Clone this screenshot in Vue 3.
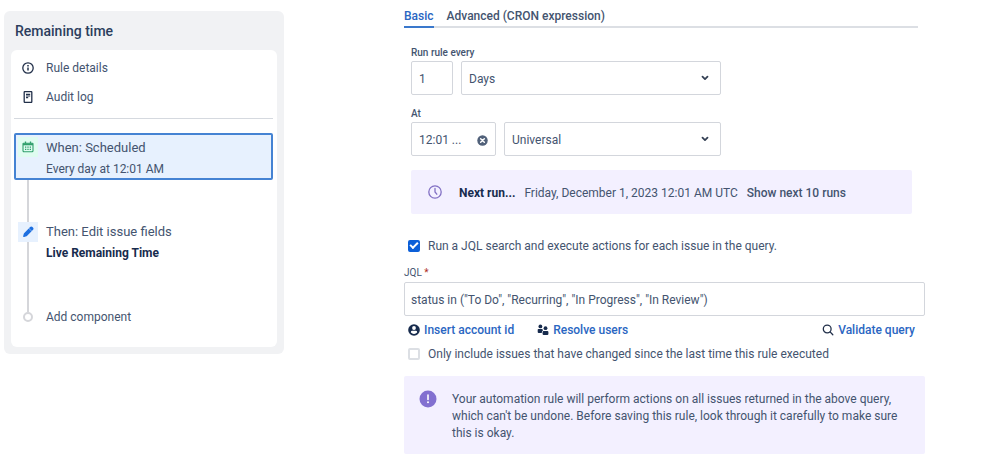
<script setup>
import { ref } from 'vue'

const tab = ref('basic')
const every = ref('1')
const unit = ref('Days')
const time = ref('12:01 ...')
const zone = ref('Universal')
const runSearch = ref(true)
const onlyChanged = ref(false)
const jql = ref('status in ("To Do", "Recurring", "In Progress", "In Review")')
</script>

<template>
  <div class="page">
    <aside class="rule">
      <h2 class="rule-title">Remaining time</h2>
      <div class="rule-card">
        <nav class="rule-nav">
          <a class="nav-item" href="#details">
            <svg viewBox="0 0 12 12" width="12" height="12" fill="none" stroke="#22304a">
              <circle cx="6" cy="6" r="5.2" stroke-width="1.3" />
              <path d="M6 5.4v3.2" stroke-width="1.5" />
              <path d="M6 3.1v1.4" stroke-width="1.5" />
            </svg>
            <span>Rule details</span>
          </a>
          <a class="nav-item" href="#audit">
            <svg viewBox="0 0 12 12" width="12" height="12" fill="none" stroke="#22304a">
              <path d="M2.800.6h6.400a.6.6 0 0 1 .6.6v9.600a.6.6 0 0 1-.6.6H2.800a.6.6 0 0 1-.6-.6V1.200a.6.6 0 0 1 .6-.6z" stroke-width="1.300" />
              <path d="M4 3.300h4.200M4 5h4.200M4 6.700h2.200" stroke-width="1.200" />
            </svg>
            <span>Audit log</span>
          </a>
        </nav>
        <ol class="steps">
          <li class="step selected">
            <div class="rail">
              <span class="badge green">
                <svg viewBox="0 0 12 12" width="12" height="12" fill="none" stroke="#2f9e6b">
                  <path d="M1.600 2.200h8.800a.6.6 0 0 1 .6.6v7a1 1 0 0 1-1 1H2a1 1 0 0 1-1-1v-7a.6.6 0 0 1 .6-.6z" stroke-width="1.100" />
                  <path d="M1 3.400h10" stroke-width="1.800" />
                  <path d="M3.500.6v2M8.500.6v2" stroke-width="1.300" />
                  <path d="M3 6.200h6M3 8.400h6" stroke-width="1.200" stroke-dasharray="1.300 1.050" />
                </svg>
              </span>
            </div>
            <div class="step-text">
              <span class="step-name">When: Scheduled</span>
              <span class="step-info">Every day at 12:01 AM</span>
            </div>
          </li>
          <li class="step gap" aria-hidden="true">
            <div class="rail"><span class="line"></span></div>
          </li>
          <li class="step edit">
            <div class="rail">
              <span class="badge blue">
                <svg viewBox="0 0 12 12" width="12" height="12" fill="#1d6fe0">
                  <path d="M6.700 2.400l2.900 2.900-4.700 4.700a1.200 1.200 0 0 1-.5.3l-2.200.6c-.7.2-1.200-.3-1-1l.6-2.200a1.200 1.200 0 0 1 .3-.5z" />
                  <path d="M7 2.300l1.100-1.200a1.700 1.700 0 0 1 2.400 0l.4.4a1.700 1.700 0 0 1 0 2.400L9.700 5z" />
                </svg>
              </span>
              <span class="line"></span>
            </div>
            <div class="step-text">
              <span class="step-name">Then: Edit issue fields</span>
              <strong class="step-info strong">Live Remaining Time</strong>
            </div>
          </li>
          <li class="step add">
            <div class="rail"><span class="dot"></span></div>
            <button class="add-button" type="button">Add component</button>
          </li>
        </ol>
      </div>
    </aside>

    <main class="config">
      <div class="tabs" role="tablist">
        <button class="tab" :class="{ active: tab === 'basic' }" type="button" role="tab" @click="tab = 'basic'">Basic</button>
        <button class="tab" :class="{ active: tab === 'cron' }" type="button" role="tab" @click="tab = 'cron'">Advanced (CRON expression)</button>
      </div>

      <section class="schedule">
        <div class="fields">
          <label class="label" for="every">Run rule every</label>
          <div class="row">
            <input id="every" v-model="every" class="box every" type="text" />
            <div class="select">
              <select v-model="unit" class="box" aria-label="Unit">
                <option>Days</option>
                <option>Weeks</option>
              </select>
              <svg class="chevron" viewBox="0 0 8 6" width="8" height="6" fill="none" stroke="#344054" stroke-width="1.800" stroke-linecap="round" stroke-linejoin="round">
                <path d="M1.500 1.700L4 4.100l2.500-2.400" />
              </svg>
            </div>
          </div>
          <label class="label" for="at">At</label>
          <div class="row">
            <div class="box time">
              <input id="at" v-model="time" class="time-input" type="text" />
              <button class="clear" type="button" aria-label="Clear" @click="time = ''">
                <svg viewBox="0 0 12 12" width="11" height="11">
                  <circle cx="6" cy="6" r="5.700" fill="#51617a" />
                  <path d="M4 4l4 4M8 4l-4 4" stroke="#fff" stroke-width="1.600" stroke-linecap="round" />
                </svg>
              </button>
            </div>
            <div class="select">
              <select v-model="zone" class="box" aria-label="Time zone">
                <option>Universal</option>
                <option>Local</option>
              </select>
              <svg class="chevron" viewBox="0 0 8 6" width="8" height="6" fill="none" stroke="#344054" stroke-width="1.800" stroke-linecap="round" stroke-linejoin="round">
                <path d="M1.500 1.700L4 4.100l2.500-2.400" />
              </svg>
            </div>
          </div>
        </div>

        <div class="next-run">
          <svg viewBox="0 0 14 14" width="14" height="14" fill="none" stroke="#8270c4" stroke-width="1.300" stroke-linecap="round">
            <circle cx="7" cy="7" r="6.200" />
            <path d="M7 3.400V7l1.800 2.200" />
          </svg>
          <p class="next-text">
            <strong class="next-label">Next run...</strong>
            <span>Friday, December 1, 2023 12:01 AM UTC</span>
            <button class="show-next" type="button">Show next 10 runs</button>
          </p>
        </div>
      </section>

      <section class="query">
        <label class="check">
          <input v-model="runSearch" type="checkbox" />
          <span>Run a JQL search and execute actions for each issue in the query.</span>
        </label>
        <label class="label jql-label" for="jql">JQL <span class="required">*</span></label>
        <input id="jql" v-model="jql" class="box jql" type="text" />
        <div class="links">
          <a class="link" href="#account">
            <svg viewBox="0 0 12 12" width="12" height="12">
              <circle cx="6" cy="6" r="5.800" fill="#172b4d" />
              <circle cx="6" cy="4" r="1.900" fill="#fff" />
              <path d="M2.900 8.600V8A1.200 1.200 0 0 1 4.100 6.800h3.800A1.200 1.200 0 0 1 9.100 8v.6A4 4 0 0 1 6 10a4 4 0 0 1-3.100-1.400z" fill="#fff" />
            </svg>
            <span>Insert account id</span>
          </a>
          <a class="link" href="#users">
            <svg viewBox="0 0 12 12" width="12" height="12" fill="#172b4d">
              <circle cx="3.400" cy="2.400" r="1.900" />
              <circle cx="8.500" cy="4.200" r="1.900" />
              <path d="M1.500 5h3.900a2.900 2.900 0 0 0 .6 1.500A2 2 0 0 0 4.800 8.400V9H1.700A1 1 0 0 1 .7 8V5.800A.8.8 0 0 1 1.500 5z" />
              <path d="M6.600 6.900h3.800a1 1 0 0 1 1 1v2.200a1 1 0 0 1-1 1H6.600a1 1 0 0 1-1-1V7.900a1 1 0 0 1 1-1z" />
            </svg>
            <span>Resolve users</span>
          </a>
          <a class="link validate" href="#validate">
            <svg viewBox="0 0 12 12" width="12" height="12" fill="none" stroke="#22304a" stroke-width="1.300" stroke-linecap="round">
              <circle cx="5.200" cy="5" r="3.900" />
              <path d="M8.100 7.900l2.700 2.800" />
            </svg>
            <span>Validate query</span>
          </a>
        </div>
        <label class="check">
          <input v-model="onlyChanged" type="checkbox" />
          <span>Only include issues that have changed since the last time this rule executed</span>
        </label>
        <div class="notice">
          <svg viewBox="0 0 18 18" width="18" height="18">
            <circle cx="9" cy="9" r="8.500" fill="#8270d0" />
            <path d="M9 5v4.400" stroke="#fff" stroke-width="1.600" stroke-linecap="round" />
            <circle cx="9" cy="12.300" r="1" fill="#fff" />
          </svg>
          <p>Your automation rule will perform actions on all issues returned in the above query, which can't be undone. Before saving this rule, look through it carefully to make sure this is okay.</p>
        </div>
      </section>
    </main>
  </div>
</template>

<style>
body {
  background: #fff;
}
</style>

<style scoped>
.page {
  display: grid;
  grid-template-columns: minmax(200px, 280px) minmax(0, 1fr);
  gap: 120px;
  align-items: start;
  padding: 0 74px 6px 4px;
  font-family: Roboto, "Open Sans", sans-serif;
  font-size: 12px;
  line-height: 17px;
  color: #44546f;
}
.page * {
  box-sizing: border-box;
}
a {
  color: inherit;
  text-decoration: none;
}
button,
input,
select {
  font: inherit;
  color: inherit;
}
button {
  padding: 0;
  border: 0;
  background: none;
  cursor: pointer;
}

.rule {
  margin-top: 11px;
  padding: 11px 7px 7px;
  border-radius: 6px;
  background: #f1f2f4;
}
.rule-title {
  margin: 0 0 10px;
  padding: 0 4px;
  font-size: 14px;
  line-height: 18px;
  font-weight: 500;
  color: #2c3e5d;
}
.rule-card {
  padding: 3px 4px 25px 3px;
  border-radius: 6px;
  background: #fff;
}
.rule-nav {
  padding-bottom: 7px;
  border-bottom: 1px solid #d5d9df;
}
.nav-item {
  display: flex;
  align-items: center;
  gap: 12px;
  height: 29px;
  padding-left: 8px;
}
.nav-item span,
.link span,
.check span {
  padding-top: 2px;
  line-height: 17px;
}
.steps {
  margin: 14px 0 0;
  padding: 0;
  list-style: none;
}
.step {
  display: grid;
  grid-template-columns: 24px 1fr;
  gap: 6px;
  padding: 0 2px;
}
.step.selected {
  padding: 0;
  border: 2px solid #4583d3;
  border-radius: 2px;
  background: #e7f1fe;
}
.rail {
  display: flex;
  flex-direction: column;
  align-items: center;
}
.badge {
  display: flex;
  align-items: center;
  justify-content: center;
  width: 20px;
  height: 20px;
}
.green {
  margin-top: 2px;
  background: #dffcf0;
}
.blue {
  background: #e7f1fe;
}
.line {
  flex: 1;
  width: 2px;
  background: #d5d6da;
}
.gap {
  height: 42px;
}
.edit {
  height: 90px;
}
.step-text {
  display: flex;
  flex-direction: column;
  gap: 4px;
  padding-top: 1px;
}
.selected .step-text {
  padding-top: 4px;
}
.step-name {
  font-size: 13px;
  line-height: 18px;
}
.step-info {
  line-height: 17px;
}
.strong {
  font-weight: 700;
  color: #172b4d;
}
.add {
  align-items: center;
  height: 10px;
  grid-template-rows: 10px;
}
.dot {
  width: 10px;
  height: 10px;
  border: 2px solid #d5d6da;
  border-radius: 50%;
}
.add-button {
  justify-self: start;
}

.tabs {
  display: flex;
  gap: 13px;
  margin-right: 7px;
  padding-top: 6px;
  border-bottom: 2px solid #dcdfe4;
}
.tab {
  height: 22px;
  margin-bottom: -2px;
  border-bottom: 2px solid transparent;
  font-weight: 500;
}
.tab.active {
  border-color: #3a78cc;
  color: #2a66c2;
}
.schedule {
  padding: 17px 13px 0 7px;
}
.fields {
  max-width: 310px;
}
.label {
  display: block;
  font-size: 10px;
  line-height: 16px;
  font-weight: 500;
}
.row {
  display: flex;
  gap: 8px;
  margin-bottom: 11px;
}
.box {
  width: 100%;
  height: 34px;
  padding: 2px 7px 0;
  border: 1px solid #d3d6dc;
  border-radius: 2px;
  outline: 0;
  background: #fff;
}
.every {
  width: 42px;
}
.time {
  display: flex;
  align-items: center;
  width: 85px;
}
.time-input {
  flex: 1;
  min-width: 0;
  padding: 0;
  border: 0;
  outline: 0;
  background: none;
}
.clear {
  display: flex;
}
.select {
  position: relative;
  flex: 1;
}
.select .box {
  appearance: none;
}
.chevron {
  position: absolute;
  top: 14px;
  right: 12px;
  pointer-events: none;
}
.next-run {
  display: flex;
  align-items: center;
  gap: 17px;
  height: 44px;
  margin-top: 14px;
  padding: 0 17px;
  border-radius: 2px;
  background: #f3f0ff;
}
.next-text {
  display: flex;
  gap: 9px;
  margin: 0;
  padding-top: 2px;
}
.next-label {
  font-weight: 700;
  color: #172b4d;
}
.show-next {
  font-weight: 500;
}
.query {
  padding-top: 22px;
}
.check {
  display: flex;
  align-items: center;
  gap: 8px;
  padding-left: 4px;
}
.check input {
  display: grid;
  place-items: center;
  appearance: none;
  width: 12px;
  height: 12px;
  margin: 0;
  border: 2px solid #dcdfe4;
  border-radius: 2px;
}
.check input:checked {
  border-color: #0c5fd8;
  background: #0c5fd8;
}
.check input:checked::after {
  content: "";
  width: 6px;
  height: 3px;
  border: solid #fff;
  border-width: 0 0 2px 2px;
  transform: translateY(-1px) rotate(-45deg);
}
.jql-label {
  margin-top: 10px;
  font-weight: 400;
}
.required {
  color: #ae2e24;
}
.jql {
  display: block;
  margin-top: 1px;
  padding-left: 6px;
}
.links {
  display: flex;
  gap: 23px;
  padding: 4px 10px 5px 4px;
}
.link {
  display: flex;
  align-items: center;
  gap: 4px;
  font-weight: 500;
  color: #2a66c2;
}
.validate {
  margin-left: auto;
}
.notice {
  display: flex;
  gap: 15px;
  margin-top: 13px;
  padding: 14px 15px 12px;
  border-radius: 2px;
  background: #f3f0ff;
}
.notice svg {
  flex: none;
}
.notice p {
  margin: 0;
  padding-top: 1px;
}
</style>
